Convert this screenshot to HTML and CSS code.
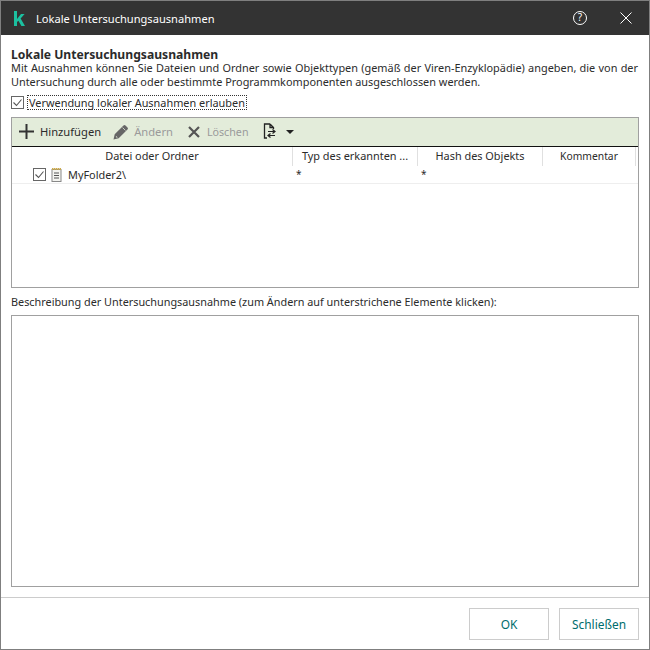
FILE: index.html
```html
<!DOCTYPE html>
<html lang="de">
<head>
<meta charset="utf-8">
<title>Lokale Untersuchungsausnahmen</title>
<link rel="stylesheet" href="styles.css">
</head>
<body>
<div class="window">
  <header class="titlebar">
    <svg class="logo" width="12" height="15" viewBox="0 0 12 15"><path d="M1 0h3v15H1zM4 8l4-5h3.6L7.6 7.6 12 15H8.4L5.4 9.8 4 11z" fill="#1cc0a0"/></svg>
    <span class="title">Lokale Untersuchungsausnahmen</span>
    <svg class="help" width="16" height="16" viewBox="0 0 16 16"><circle cx="8" cy="8" r="6.5" fill="none" stroke="#fff" stroke-width="1"/><text x="8" y="11" text-anchor="middle" class="help-q">?</text></svg>
    <svg class="close" width="14" height="14" viewBox="0 0 14 14"><path d="M1.5 1.5l11 11M12.5 1.5l-11 11" stroke="#fff" stroke-width="1" fill="none"/></svg>
  </header>
  <main class="content">
    <h1 class="heading">Lokale Untersuchungsausnahmen</h1>
    <p class="intro">Mit Ausnahmen können Sie Dateien und Ordner sowie Objekttypen (gemäß der Viren-Enzyklopädie) angeben, die von der Untersuchung durch alle oder bestimmte Programmkomponenten ausgeschlossen werden.</p>
    <label class="allow">
      <span class="check"><svg width="13" height="13" viewBox="0 0 13 13"><path d="M2.5 6.5l3 3 5-6" fill="none" stroke="#555" stroke-width="1.1"/></svg></span>
      <span class="allow-text">Verwendung lokaler Ausnahmen erlauben</span>
    </label>
    <section class="panel">
      <div class="toolbar">
        <span class="tool add"><svg width="15" height="15" viewBox="0 0 15 15"><path d="M7.5 0v15M0 7.5h15" stroke="#333" stroke-width="2"/></svg><span>Hinzufügen</span></span>
        <span class="tool off edit"><svg width="16" height="16" viewBox="0 0 16 16"><path d="M0.5 15.5l1.2-5.2L10.5 1.5a1.4 1.4 0 0 1 2 0l2 2a1.4 1.4 0 0 1 0 2L5.7 14.3z" fill="#666"/><path d="M2.8 12.8l1 1 .9-.3-1.6-1.6z" fill="#e3ecda"/><path d="M9.6 3.6l2.8 2.8" stroke="#e3ecda" stroke-width="0.8"/></svg><span>Ändern</span></span>
        <span class="tool off del"><svg width="12" height="12" viewBox="0 0 12 12"><path d="M1 1l10 10M11 1L1 11" stroke="#555" stroke-width="2.2"/></svg><span>Löschen</span></span>
        <span class="tool menu"><svg width="13" height="17" viewBox="0 0 13 17"><path d="M7 1H1.500v14H4M7 1l3.500 3.500V6M7 1v3.500h3.500" fill="none" stroke="#222" stroke-width="1.3"/><path d="M5 8.500h6.500M9.500 6.500l2.500 2-2.500 2M12 12.500H5.500M7.500 10.500L5 12.500l2.500 2" fill="none" stroke="#222" stroke-width="1.2"/></svg><i class="caret"></i></span>
      </div>
      <div class="cols">
        <div class="col c1">Datei oder Ordner</div>
        <div class="col c2">Typ des erkannten ...</div>
        <div class="col c3">Hash des Objekts</div>
        <div class="col c4">Kommentar</div>
      </div>
      <div class="row">
        <div class="cell c1 name">
          <span class="check"><svg width="13" height="13" viewBox="0 0 13 13"><path d="M2.5 6.5l3 3 5-6" fill="none" stroke="#555" stroke-width="1.1"/></svg></span>
          <svg class="note" width="11" height="14" viewBox="0 0 11 14"><rect x="1" y="1.500" width="9" height="12" fill="#f4f4f0" stroke="#888"/><path d="M1 1h9" stroke="#c9a94e" stroke-width="2" stroke-dasharray="1.500 .5"/><path d="M3 5h5M3 7.500h5M3 10h5" stroke="#555"/></svg>
          <span class="fname">MyFolder2\</span>
        </div>
        <div class="cell c2 val">*</div>
        <div class="cell c3 val">*</div>
        <div class="cell c4"></div>
      </div>
    </section>
    <div class="desc-label">Beschreibung der Untersuchungsausnahme (zum Ändern auf unterstrichene Elemente klicken):</div>
    <div class="desc-box"></div>
  </main>
  <footer class="footer">
    <button class="btn">OK</button>
    <button class="btn">Schließen</button>
  </footer>
</div>
</body>
</html>
```
FILE: styles.css
```css
* { box-sizing: border-box; }
html, body { margin: 0; padding: 0; background: #fff; }
body { font-family: "Noto Sans", sans-serif; font-size: 10.9px; color: #2b2b2b; }
.window { width: 650px; height: 650px; border: 1px solid #7f7f7f; display: flex; flex-direction: column; background: #fff; }
.titlebar { height: 34px; flex: none; background: #333; color: #fff; display: flex; align-items: center; padding-left: 12px; }
.logo { flex: none; }
.title { margin-left: 11px; font-size: 11.1px; flex: 1; }
.help { margin-right: 31px; }
.help-q { font: 10px "Noto Sans", sans-serif; fill: #fff; }
.close { margin-right: 16px; }
.content { flex: 1; padding: 13px 10px 10px; display: flex; flex-direction: column; min-height: 0; }
.heading { margin: 0; font-size: 12.15px; font-weight: 700; line-height: 13px; color: #2b2b2b; }
.intro { margin: 0; line-height: 14px; color: #2b2b2b; text-align: justify; padding-right: 1px; }
.allow { display: flex; align-items: center; margin-top: 6px; height: 15px; gap: 4px; }
.check { width: 13px; height: 13px; border: 1px solid #666; display: inline-flex; background: #fff; flex: none; }
.check svg { margin: -1px; flex: none; }
.allow-text { outline: 1px dotted #333; line-height: 13px; padding: 0 1px; }
.panel { margin-top: 7px; height: 171px; flex: none; border: 1px solid #a0a0a0; display: flex; flex-direction: column; }
.toolbar { height: 29px; flex: none; background: #e3ecda; border-bottom: 1px solid #111; display: flex; align-items: center; padding: 0 0 1px 7px; font-size: 11.2px; }
.tool { display: inline-flex; align-items: center; }
.tool.off { color: #9a9a9a; }
.add { gap: 6px; margin-right: 12px; }
.edit { gap: 5px; margin-right: 15px; }
.del { gap: 7px; margin-right: 14px; font-size: 10.7px; }
.menu { gap: 10px; }
.caret { width: 0; height: 0; border: 4px solid transparent; border-top-color: #222; border-bottom: 0; }
.cols { display: flex; height: 19px; flex: none; }
.col { text-align: center; line-height: 17px; border-right: 1px solid #e0e0e0; }
.row { display: flex; height: 18px; border-bottom: 1px solid #eee; flex: none; }
.cell { line-height: 15px; }
.c1 { width: 281px; }
.c2 { width: 125px; }
.c3 { width: 125px; }
.c4 { width: 93px; }
.col.c4 { font-size: 10.3px; line-height: 19px; }
.name { display: flex; align-items: center; gap: 5px; padding-left: 21px; }
.fname { margin-left: 1px; }
.val { padding-left: 3px; padding-top: 1px; font-size: 10px; }
.desc-label { margin-top: 7px; line-height: 14px; font-size: 10.85px; }
.desc-box { margin-top: 6px; flex: 1; border: 1px solid #a0a0a0; }
.footer { height: 52px; flex: none; border-top: 1px solid #ccc; display: flex; justify-content: flex-end; align-items: center; gap: 10px; padding-right: 10px; }
.btn { width: 80px; height: 32px; background: #fff; border: 1px solid #ccc; color: #006d6d; font: 11.9px "Noto Sans", sans-serif; padding: 0; }
```
